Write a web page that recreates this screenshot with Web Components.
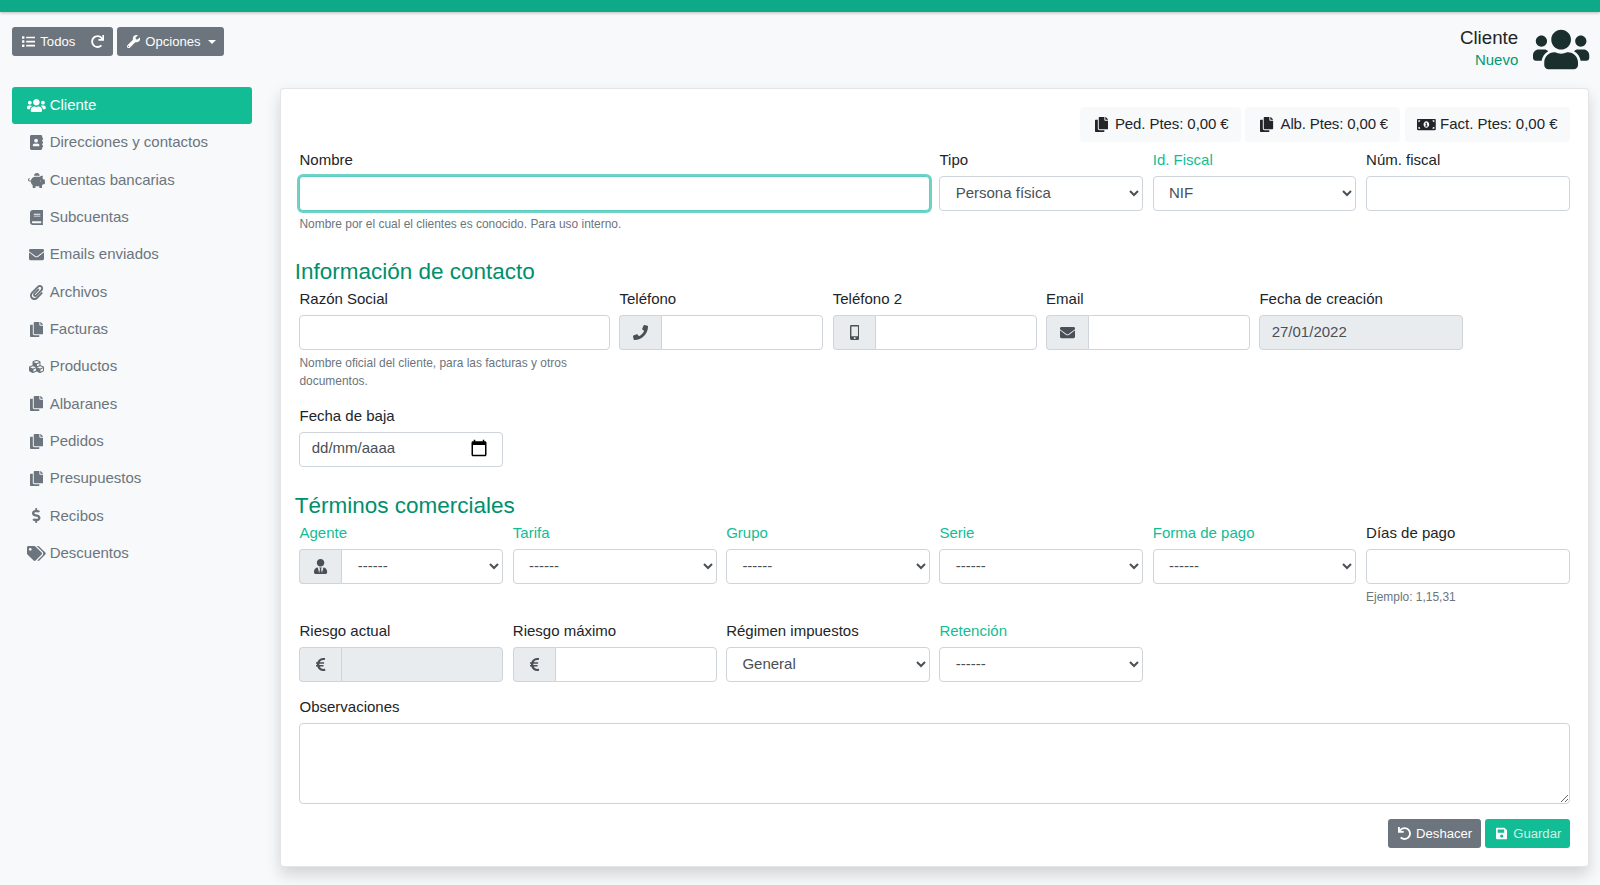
<!DOCTYPE html>
<html lang="es">
<head>
<meta charset="utf-8">
<title>Cliente</title>
<style>
  html, body { margin: 0; padding: 0; }
  body {
    min-height: 100vh;
    background: #f8f9fa;
    color: #212529;
    font: 15px/1.5 "Liberation Sans", Arial, sans-serif;
  }
</style>
</head>
<body>
<app-topbar></app-topbar>
<app-header></app-header>
<app-main>
  <app-sidebar slot="side">
    <app-nav-item icon="users" active>Cliente</app-nav-item>
    <app-nav-item icon="address-book">Direcciones y contactos</app-nav-item>
    <app-nav-item icon="piggy-bank">Cuentas bancarias</app-nav-item>
    <app-nav-item icon="book">Subcuentas</app-nav-item>
    <app-nav-item icon="envelope">Emails enviados</app-nav-item>
    <app-nav-item icon="paperclip">Archivos</app-nav-item>
    <app-nav-item icon="copy">Facturas</app-nav-item>
    <app-nav-item icon="cubes">Productos</app-nav-item>
    <app-nav-item icon="copy">Albaranes</app-nav-item>
    <app-nav-item icon="copy">Pedidos</app-nav-item>
    <app-nav-item icon="copy">Presupuestos</app-nav-item>
    <app-nav-item icon="dollar-sign">Recibos</app-nav-item>
    <app-nav-item icon="tags">Descuentos</app-nav-item>
  </app-sidebar>
  <app-card slot="content">
    <app-stats>
      <app-stat icon="copy" style="letter-spacing: -.08px">Ped. Ptes: 0,00 €</app-stat>
      <app-stat icon="copy" style="letter-spacing: -.15px">Alb. Ptes: 0,00 €</app-stat>
      <app-stat icon="money-bill-alt">Fact. Ptes: 0,00 €</app-stat>
    </app-stats>
    <app-row>
      <app-field span="6" label="Nombre" focused help="Nombre por el cual el clientes es conocido. Para uso interno."></app-field>
      <app-field span="2" label="Tipo" kind="select" value="Persona física"></app-field>
      <app-field span="2" label="Id. Fiscal" accent kind="select" value="NIF"></app-field>
      <app-field span="2" label="Núm. fiscal"></app-field>
    </app-row>
    <app-section>Información de contacto</app-section>
    <app-row>
      <app-field span="3" label="Razón Social" help="Nombre oficial del cliente, para las facturas y otros documentos."></app-field>
      <app-field span="2" label="Teléfono" addon="phone"></app-field>
      <app-field span="2" label="Teléfono 2" addon="mobile-alt"></app-field>
      <app-field span="2" label="Email" addon="envelope"></app-field>
      <app-field span="2" label="Fecha de creación" value="27/01/2022" disabled></app-field>
    </app-row>
    <app-row>
      <app-field span="2" label="Fecha de baja" kind="date"></app-field>
    </app-row>
    <app-section>Términos comerciales</app-section>
    <app-row>
      <app-field span="2" label="Agente" accent kind="select" addon="user-tie" value="------"></app-field>
      <app-field span="2" label="Tarifa" accent kind="select" value="------"></app-field>
      <app-field span="2" label="Grupo" accent kind="select" value="------"></app-field>
      <app-field span="2" label="Serie" accent kind="select" value="------"></app-field>
      <app-field span="2" label="Forma de pago" accent kind="select" value="------"></app-field>
      <app-field span="2" label="Días de pago" help="Ejemplo: 1,15,31" style="padding-bottom: 12.5px"></app-field>
    </app-row>
    <app-row>
      <app-field span="2" label="Riesgo actual" addon="euro-sign" disabled></app-field>
      <app-field span="2" label="Riesgo máximo" addon="euro-sign"></app-field>
      <app-field span="2" label="Régimen impuestos" kind="select" value="General"></app-field>
      <app-field span="2" label="Retención" accent kind="select" value="------"></app-field>
    </app-row>
    <app-row>
      <app-field span="12" label="Observaciones" kind="area"></app-field>
    </app-row>
    <app-actions></app-actions>
  </app-card>
</app-main>

<script>
const ICONS = {
  users: [640, "M96 224c35.3 0 64-28.7 64-64s-28.7-64-64-64-64 28.7-64 64 28.7 64 64 64zm448 0c35.3 0 64-28.7 64-64s-28.7-64-64-64-64 28.7-64 64 28.7 64 64 64zm32 32h-64c-17.6 0-33.5 7.1-45.1 18.6 40.3 22.1 68.9 62 75.1 109.4h66c17.7 0 32-14.3 32-32v-32c0-35.3-28.7-64-64-64zm-256 0c61.9 0 112-50.1 112-112S381.9 32 320 32 208 82.1 208 144s50.1 112 112 112zm76.8 32h-8.3c-20.8 10-43.9 16-68.5 16s-47.6-6-68.5-16h-8.3C179.6 288 128 339.6 128 403.2V432c0 26.5 21.5 48 48 48h288c26.5 0 48-21.5 48-48v-28.8c0-63.6-51.6-115.2-115.2-115.2zm-223.7-13.4C161.5 263.1 145.6 256 128 256H64c-35.3 0-64 28.7-64 64v32c0 17.7 14.3 32 32 32h65.9c6.3-47.4 34.9-87.3 75.2-109.4z"],
  list: [512, "M80 368H16a16 16 0 0 0-16 16v64a16 16 0 0 0 16 16h64a16 16 0 0 0 16-16v-64a16 16 0 0 0-16-16zm0-320H16A16 16 0 0 0 0 64v64a16 16 0 0 0 16 16h64a16 16 0 0 0 16-16V64a16 16 0 0 0-16-16zm0 160H16a16 16 0 0 0-16 16v64a16 16 0 0 0 16 16h64a16 16 0 0 0 16-16v-64a16 16 0 0 0-16-16zm416 176H176a16 16 0 0 0-16 16v32a16 16 0 0 0 16 16h320a16 16 0 0 0 16-16v-32a16 16 0 0 0-16-16zm0-320H176a16 16 0 0 0-16 16v32a16 16 0 0 0 16 16h320a16 16 0 0 0 16-16V80a16 16 0 0 0-16-16zm0 160H176a16 16 0 0 0-16 16v32a16 16 0 0 0 16 16h320a16 16 0 0 0 16-16v-32a16 16 0 0 0-16-16z"],
  redo: [512, "M500.33 0h-47.41a12 12 0 0 0-12 12.57l4 82.76A247.42 247.42 0 0 0 256 8C119.34 8 7.9 119.53 8 256.19 8.1 393.07 119.1 504 256 504a247.1 247.1 0 0 0 166.18-63.91 12 12 0 0 0 .48-17.43l-34-34a12 12 0 0 0-16.38-.55A176 176 0 1 1 402.1 157.8l-101.53-4.87a12 12 0 0 0-12.57 12v47.41a12 12 0 0 0 12 12h200.33a12 12 0 0 0 12-12V12a12 12 0 0 0-12-12z"],
  undo: [512, "M212.333 224.333H12c-6.627 0-12-5.373-12-12V12C0 5.373 5.373 0 12 0h48c6.627 0 12 5.373 12 12v78.112C117.773 39.279 184.26 7.47 258.175 8.007c136.906.994 246.448 111.623 246.157 248.532C504.041 393.258 393.12 504 256.333 504c-64.089 0-122.496-24.313-166.51-64.215-5.099-4.622-5.334-12.554-.467-17.42l33.967-33.967c4.474-4.474 11.662-4.717 16.401-.525C170.76 415.336 211.58 432 256.333 432c97.268 0 176-78.716 176-176 0-97.267-78.716-176-176-176-58.496 0-110.28 28.476-142.274 72.333h98.274c6.627 0 12 5.373 12 12v48c0 6.627-5.373 12-12 12z"],
  wrench: [512, "M507.73 109.1c-2.24-9.03-13.54-12.09-20.12-5.51l-74.36 74.36-67.88-11.31-11.31-67.88 74.36-74.36c6.62-6.62 3.43-17.9-5.66-20.16-47.38-11.74-99.55.91-136.58 37.93-39.64 39.64-50.55 97.1-34.05 147.2L18.74 402.76c-24.99 24.99-24.99 65.51 0 90.5 24.99 24.99 65.51 24.99 90.5 0l213.21-213.21c50.12 16.71 107.47 5.68 147.37-34.22 37.07-37.07 49.7-89.32 37.91-136.73zM64 472c-13.25 0-24-10.75-24-24 0-13.26 10.75-24 24-24s24 10.74 24 24c0 13.25-10.75 24-24 24z"],
  "address-book": [448, "M436 160c6.6 0 12-5.4 12-12v-40c0-6.6-5.4-12-12-12h-20V48c0-26.5-21.5-48-48-48H48C21.5 0 0 21.5 0 48v416c0 26.5 21.5 48 48 48h320c26.5 0 48-21.5 48-48v-48h20c6.6 0 12-5.4 12-12v-40c0-6.6-5.4-12-12-12h-20v-64h20c6.6 0 12-5.4 12-12v-40c0-6.6-5.4-12-12-12h-20v-64h20zm-228-32c35.3 0 64 28.7 64 64s-28.7 64-64 64-64-28.7-64-64 28.7-64 64-64zm112 236.8c0 10.6-10 19.2-22.4 19.2H118.4C106 384 96 375.4 96 364.8v-19.2c0-31.8 30.1-57.6 67.2-57.6h5c12.3 5.1 25.7 8 39.8 8s27.6-2.9 39.8-8h5c37.1 0 67.2 25.8 67.2 57.6v19.2z"],
  "piggy-bank": [576, "M560 224h-29.5c-8.8-20-21.6-37.7-37.4-52.5L512 96h-32c-29.4 0-55.4 13.5-73 34.3-7.6-1.1-15.1-2.3-23-2.3H256c-77.4 0-141.9 55-156.8 128H56c-14.8 0-26.5-13.5-23.5-28.8C34.7 215.8 45.4 208 57 208h1c3.3 0 6-2.7 6-6v-20c0-3.3-2.7-6-6-6-28.5 0-53.9 20.4-57.5 48.6C-3.9 258.8 22.7 288 56 288h40c0 52.2 25.4 98.1 64 127.3V496c0 8.8 7.2 16 16 16h64c8.8 0 16-7.2 16-16v-48h128v48c0 8.8 7.2 16 16 16h64c8.8 0 16-7.2 16-16v-80.7c11.8-8.9 22.3-19.4 31.3-31.3H560c8.8 0 16-7.2 16-16V240c0-8.8-7.2-16-16-16zm-128 64c-8.8 0-16-7.2-16-16s7.2-16 16-16 16 7.2 16 16-7.2 16-16 16zM256 96h128c5.4 0 10.7.4 15.9.8 0-.3.1-.5.1-.8 0-53-43-96-96-96s-96 43-96 96c0 2.1.5 4.1.6 6.2 15.2-3.9 31-6.2 47.4-6.2z"],
  book: [448, "M448 360V24c0-13.3-10.7-24-24-24H96C43 0 0 43 0 96v320c0 53 43 96 96 96h328c13.3 0 24-10.7 24-24v-16c0-7.5-3.5-14.3-8.9-18.7-4.2-15.4-4.2-59.3 0-74.7 5.4-4.3 8.9-11.1 8.9-18.6zM128 134c0-3.3 2.7-6 6-6h212c3.3 0 6 2.7 6 6v20c0 3.3-2.7 6-6 6H134c-3.3 0-6-2.7-6-6v-20zm0 64c0-3.3 2.7-6 6-6h212c3.3 0 6 2.7 6 6v20c0 3.3-2.7 6-6 6H134c-3.3 0-6-2.7-6-6v-20zm253.4 250H96c-17.7 0-32-14.3-32-32 0-17.6 14.4-32 32-32h285.4c-1.9 17.1-1.9 46.9 0 64z"],
  envelope: [512, "M502.3 190.8c3.9-3.1 9.7-.2 9.7 4.7V400c0 26.5-21.5 48-48 48H48c-26.5 0-48-21.5-48-48V195.6c0-5 5.7-7.8 9.7-4.7 22.4 17.4 52.1 39.5 154.1 113.6 21.1 15.4 56.7 47.8 92.2 47.6 35.7.3 72-32.8 92.3-47.6 102-74.1 131.6-96.3 154-113.7zM256 320c23.2.4 56.6-29.2 73.4-41.4 132.7-96.3 142.8-104.7 173.4-128.7 5.8-4.5 9.2-11.5 9.2-18.9v-19c0-26.5-21.5-48-48-48H48C21.5 64 0 85.5 0 112v19c0 7.4 3.4 14.3 9.2 18.9 30.6 23.9 40.7 32.4 173.4 128.7 16.8 12.2 50.2 41.8 73.4 41.4z"],
  paperclip: [448, "M43.246 466.142c-58.43-60.289-57.341-157.511 1.386-217.581L254.392 34c44.316-45.332 116.351-45.336 160.671 0 43.89 44.894 43.943 117.329 0 162.276L232.214 383.128c-29.855 30.537-78.633 30.111-107.982-.998-28.275-29.97-27.368-77.473 1.452-106.953l143.743-146.835c6.182-6.314 16.312-6.422 22.626-.241l22.861 22.379c6.315 6.182 6.422 16.312.241 22.626L171.427 319.927c-4.932 5.045-5.236 13.428-.648 18.292 4.372 4.634 11.245 4.711 15.688.165l182.849-186.851c19.613-20.062 19.613-52.725-.011-72.798-19.189-19.627-49.957-19.637-69.154 0L90.39 293.295c-34.763 35.56-35.299 93.12-1.191 128.313 34.01 35.093 88.985 35.137 123.058.286l172.06-175.999c6.177-6.319 16.307-6.433 22.626-.256l22.877 22.364c6.319 6.177 6.434 16.307.256 22.626l-172.06 175.998c-59.576 60.938-155.943 60.216-214.77-.485z"],
  copy: [448, "M320 448v40c0 13.255-10.745 24-24 24H24c-13.255 0-24-10.745-24-24V120c0-13.255 10.745-24 24-24h72v296c0 30.879 25.121 56 56 56h168zm0-344V0H152c-13.255 0-24 10.745-24 24v368c0 13.255 10.745 24 24 24h272c13.255 0 24-10.745 24-24V128H344c-13.2 0-24-10.8-24-24zm120.971-31.029L375.029 7.029A24 24 0 0 0 358.059 0H352v96h96v-6.059a24 24 0 0 0-7.029-16.97z"],
  cubes: [512, "M488.6 250.2L392 214V105.5c0-15-9.3-28.4-23.4-33.7l-100-37.5c-8.1-3.1-17.1-3.1-25.3 0l-100 37.5c-14.1 5.3-23.4 18.7-23.4 33.7V214l-96.6 36.2C9.3 255.5 0 268.9 0 283.9V394c0 13.6 7.7 26.1 19.9 32.2l100 50c10.1 5.1 22.1 5.1 32.2 0l103.9-52 103.9 52c10.1 5.1 22.1 5.1 32.2 0l100-50c12.2-6.1 19.9-18.6 19.9-32.2V283.9c0-15-9.3-28.4-23.4-33.7zM358 214.8l-85 31.9v-68.2l85-37v73.3zM154 104.1l102-38.2 102 38.2v.6l-102 41.4-102-41.4v-.6zm84 291.1l-85 42.5v-79.1l85-38.8v75.4zm0-112l-102 41.4-102-41.4v-.6l102-38.2 102 38.2v.6zm240 112l-85 42.5v-79.1l85-38.8v75.4zm0-112l-102 41.4-102-41.4v-.6l102-38.2 102 38.2v.6z"],
  "dollar-sign": [288, "M209.2 233.4l-108-31.6C88.7 198.2 80 186.5 80 173.5c0-16.3 13.2-29.5 29.5-29.5h66.3c12.2 0 24.2 3.7 34.2 10.5 6.1 4.1 14.3 3.1 19.5-2l34.8-34c7.1-6.9 6.1-18.4-1.8-24.5C238 74.8 207.4 64.1 176 64V16c0-8.8-7.2-16-16-16h-32c-8.8 0-16 7.2-16 16v48h-2.5C45.8 64-5.4 118.7.5 183.6c4.2 46.1 39.4 83.6 83.8 96.6l102.5 30c12.5 3.7 21.2 15.3 21.2 28.3 0 16.3-13.2 29.5-29.5 29.5h-66.3C100 368 88 364.3 78 357.5c-6.1-4.1-14.3-3.1-19.5 2l-34.8 34c-7.1 6.9-6.1 18.4 1.8 24.5 24.5 19.2 55.1 29.9 86.5 30v48c0 8.8 7.2 16 16 16h32c8.8 0 16-7.2 16-16v-48.2c46.6-.9 90.3-28.6 105.7-72.7 21.5-61.6-14.6-124.8-72.5-141.7z"],
  tags: [640, "M497.941 225.941L286.059 14.059A48 48 0 0 0 252.118 0H48C21.49 0 0 21.49 0 48v204.118a48 48 0 0 0 14.059 33.941l211.882 211.882c18.744 18.745 49.136 18.746 67.882 0l204.118-204.118c18.745-18.745 18.745-49.137 0-67.882zM112 160c-26.51 0-48-21.49-48-48s21.49-48 48-48 48 21.49 48 48-21.49 48-48 48zm513.941 133.823L421.823 497.941c-18.745 18.745-49.137 18.745-67.882 0l-.36-.36L527.64 323.522c16.999-16.999 26.36-39.6 26.36-63.64s-9.362-46.641-26.36-63.64L331.397 0h48.721a48 48 0 0 1 33.941 14.059l211.882 211.882c18.745 18.745 18.745 49.137 0 67.882z"],
  "money-bill-alt": [640, "M352 288h-16v-88c0-4.42-3.58-8-8-8h-13.58c-4.74 0-9.37 1.4-13.31 4.03l-15.33 10.22a7.995 7.995 0 0 0-2.22 11.09l8.88 13.31a7.995 7.995 0 0 0 11.09 2.22l.47-.31V288h-16c-4.42 0-8 3.58-8 8v16c0 4.42 3.58 8 8 8h64c4.42 0 8-3.58 8-8v-16c0-4.42-3.58-8-8-8zM608 64H32C14.33 64 0 78.33 0 96v320c0 17.67 14.33 32 32 32h576c17.67 0 32-14.33 32-32V96c0-17.67-14.33-32-32-32zM48 400v-64c35.35 0 64 28.65 64 64H48zm0-224v-64h64c0 35.35-28.65 64-64 64zm272 192c-53.02 0-96-50.15-96-112 0-61.86 42.98-112 96-112s96 50.14 96 112c0 61.83-42.98 112-96 112zm272 32h-64c0-35.35 28.65-64 64-64v64zm0-224c-35.35 0-64-28.65-64-64h64v64z"],
  phone: [512, "M493.4 24.6l-104-24c-11.3-2.6-22.9 3.3-27.5 13.9l-48 112c-4.2 9.8-1.4 21.3 6.9 28l60.6 49.6c-36 76.7-98.9 140.5-177.2 177.2l-49.6-60.6c-6.8-8.3-18.2-11.1-28-6.9l-112 48C3.9 366.5-2 378.1.6 389.4l24 104C27.1 504.2 36.7 512 48 512c256.1 0 464-207.5 464-464 0-11.2-7.7-20.9-18.6-23.4z"],
  "mobile-alt": [320, "M272 0H48C21.5 0 0 21.5 0 48v416c0 26.5 21.5 48 48 48h224c26.5 0 48-21.5 48-48V48c0-26.5-21.5-48-48-48zM160 480c-17.7 0-32-14.3-32-32s14.3-32 32-32 32 14.3 32 32-14.3 32-32 32zm112-108c0 6.6-5.4 12-12 12H60c-6.6 0-12-5.4-12-12V60c0-6.6 5.4-12 12-12h200c6.6 0 12 5.4 12 12v312z"],
  "user-tie": [448, "M224 256c70.7 0 128-57.3 128-128S294.7 0 224 0 96 57.3 96 128s57.3 128 128 128zm95.8 32.6L272 480l-32-136 32-56h-96l32 56-32 136-47.8-191.4C56.9 292 0 350.3 0 422.4V464c0 26.5 21.5 48 48 48h352c26.5 0 48-21.5 48-48v-41.6c0-72.1-56.9-130.4-128.2-133.8z"],
  "euro-sign": [320, "M310.706 413.765c-1.314-6.63-7.835-10.872-14.424-9.369-10.692 2.439-27.422 5.413-45.426 5.413-56.763 0-101.929-34.79-121.461-85.449h113.689a12 12 0 0 0 11.708-9.369l6.373-28.36c1.686-7.502-4.019-14.631-11.708-14.631H115.22c-1.21-14.328-1.414-28.287.137-42.245H261.95a12 12 0 0 0 11.723-9.434l6.512-29.755c1.638-7.484-4.061-14.566-11.723-14.566H130.184c20.633-44.991 62.69-75.03 117.619-75.03 14.486 0 28.564 2.25 37.851 4.145 6.216 1.268 12.347-2.498 14.002-8.623l11.991-44.368c1.822-6.741-2.465-13.616-9.326-14.917C290.217 34.912 270.71 32 249.635 32 152.451 32 74.03 92.252 45.075 176H12c-6.627 0-12 5.373-12 12v29.755c0 6.627 5.373 12 12 12h21.569c-1.009 13.607-1.181 29.287-.181 42.245H12c-6.627 0-12 5.373-12 12v28.36c0 6.627 5.373 12 12 12h30.114C67.139 414.692 145.264 480 249.635 480c26.301 0 48.562-4.544 61.101-7.788 6.167-1.595 10.027-7.708 8.788-13.957l-8.818-44.49z"],
  save: [448, "M433.941 129.941l-83.882-83.882A48 48 0 0 0 316.118 32H48C21.49 32 0 53.49 0 80v352c0 26.51 21.49 48 48 48h352c26.51 0 48-21.49 48-48V163.882a48 48 0 0 0-14.059-33.941zM224 416c-35.346 0-64-28.654-64-64 0-35.346 28.654-64 64-64s64 28.654 64 64c0 35.346-28.654 64-64 64zm96-304.52V212c0 6.627-5.373 12-12 12H76c-6.627 0-12-5.373-12-12V108c0-6.627 5.373-12 12-12h228.52c3.183 0 6.235 1.264 8.485 3.515l3.48 3.48A11.996 11.996 0 0 1 320 111.48z"]
};

// <app-icon name="users" fw> draws one of the icons above at 1em
class AppIcon extends HTMLElement {
  constructor() {
    super();
    this.attachShadow({ mode: "open" });
  }
  connectedCallback() {
    const icon = ICONS[this.getAttribute("name")];
    this.shadowRoot.innerHTML = `
      <style>
        :host {
          display: inline-flex;
          justify-content: center;
          flex: none;
          height: 1em;
          vertical-align: -0.125em;
          white-space: normal;
        }
        :host([fw]) { width: 1.25em; }
        svg { height: 1em; display: block; }
      </style>
      <svg viewBox="0 0 ${icon[0]} 512"><path fill="currentColor" d="${icon[1]}"></path></svg>`;
  }
}
customElements.define("app-icon", AppIcon);

class AppTopbar extends HTMLElement {
  constructor() {
    super();
    this.attachShadow({ mode: "open" });
    this.shadowRoot.innerHTML = `
      <style>
        :host { display: block; height: 12px; background: #0daa8a; box-shadow: 0 1px 3px rgba(0,0,0,.25); }
      </style>`;
  }
}
customElements.define("app-topbar", AppTopbar);

// small bootstrap like button
class AppBtn extends HTMLElement {
  constructor() {
    super();
    this.attachShadow({ mode: "open" });
    this.shadowRoot.innerHTML = `<style>
        :host {
          display: inline-flex;
          align-items: center;
          box-sizing: border-box;
          height: 29px;
          padding: 0 8.5px;
          border-radius: 3px;
          background: #6c757d;
          color: #fff;
          font-size: 13.125px;
          white-space: pre;
        }
        :host([primary]) { background: #12bc95; }
      </style><slot></slot>`;
  }
}
customElements.define("app-btn", AppBtn);

class AppHeader extends HTMLElement {
  constructor() {
    super();
    this.attachShadow({ mode: "open" });
    this.shadowRoot.innerHTML = `
      <style>
        :host {
          display: flex;
          justify-content: space-between;
          align-items: flex-start;
          box-sizing: border-box;
          height: 75px;
          padding: 15px 10.5px 0 12px;
        }
        .left { display: flex; }
        .opts { margin-left: 3.8px; }
        .todos { border-radius: 3px 0 0 3px; }
        .redo { margin-left: -1px; border-radius: 0 3px 3px 0; }
        .caret {
          display: inline-block;
          margin-left: 7px;
          border-top: 4px solid;
          border-left: 4px solid transparent;
          border-right: 4px solid transparent;
        }
        .right { display: flex; align-items: flex-start; }
        .txt { text-align: right; margin-right: 15px; }
        .title { font-size: 18.75px; line-height: 22.5px; margin-top: 0; }
        .sub { color: #009970; line-height: 22.5px; margin-top: -1px; }
        .big { font-size: 45px; color: #1c2f2f; }
      </style>
      <div class="left">
        <app-btn class="todos"><app-icon name="list" fw></app-icon> Todos</app-btn>
        <app-btn class="redo"><app-icon name="redo"></app-icon></app-btn>
        <app-btn class="opts"><app-icon name="wrench" fw></app-icon> Opciones<span class="caret"></span></app-btn>
      </div>
      <div class="right">
        <div class="txt">
          <div class="title">Cliente</div>
          <div class="sub">Nuevo</div>
        </div>
        <app-icon class="big" name="users"></app-icon>
      </div>`;
  }
}
customElements.define("app-header", AppHeader);

class AppMain extends HTMLElement {
  constructor() {
    super();
    this.attachShadow({ mode: "open" });
    this.shadowRoot.innerHTML = `
      <style>
        :host {
          display: grid;
          grid-template-columns: 240px 1fr;
          column-gap: 28.3px;
          padding: 0 11px 18px 12px;
          align-items: start;
        }
      </style>
      <slot name="side"></slot>
      <slot name="content"></slot>`;
  }
}
customElements.define("app-main", AppMain);

class AppSidebar extends HTMLElement {
  constructor() {
    super();
    this.attachShadow({ mode: "open" });
    this.shadowRoot.innerHTML = `
      <style>:host { display: flex; flex-direction: column; }</style>
      <slot></slot>`;
  }
}
customElements.define("app-sidebar", AppSidebar);

class AppNavItem extends HTMLElement {
  constructor() {
    super();
    this.attachShadow({ mode: "open" });
  }
  connectedCallback() {
    this.shadowRoot.innerHTML = `<style>
        :host {
          display: flex;
          align-items: center;
          gap: 3.9px;
          box-sizing: border-box;
          height: 37.33px;
          padding: 0 0 .6px 15px;
          border-radius: 3px;
          color: #6c757d;
          white-space: pre;
        }
        :host([active]) { background: #12bc95; color: #fff; }
      </style><app-icon name="${this.getAttribute("icon")}" fw></app-icon><slot></slot>`;
  }
}
customElements.define("app-nav-item", AppNavItem);

class AppCard extends HTMLElement {
  constructor() {
    super();
    this.attachShadow({ mode: "open" });
    this.shadowRoot.innerHTML = `
      <style>
        :host {
          display: block;
          box-sizing: border-box;
          height: 779.7px;
          margin-top: .7px;
          padding: 18px 18.2px 0;
          background: #fff;
          border: 1px solid rgba(0,0,0,.1);
          border-radius: 4px;
          box-shadow: 0 7.5px 15px rgba(0,0,0,.15);
        }
      </style>
      <slot></slot>`;
  }
}
customElements.define("app-card", AppCard);

class AppStats extends HTMLElement {
  constructor() {
    super();
    this.attachShadow({ mode: "open" });
    this.shadowRoot.innerHTML = `
      <style>:host { display: flex; justify-content: flex-end; gap: 4.5px; margin-bottom: 7px; }</style>
      <slot></slot>`;
  }
}
customElements.define("app-stats", AppStats);

class AppStat extends HTMLElement {
  constructor() {
    super();
    this.attachShadow({ mode: "open" });
  }
  connectedCallback() {
    this.shadowRoot.innerHTML = `<style>
        :host {
          display: flex;
          align-items: center;
          gap: 4.2px;
          box-sizing: border-box;
          height: 35px;
          padding: 0 12.25px;
          background: #f8f9fa;
          border-radius: 4px;
          white-space: pre;
        }
      </style><app-icon name="${this.getAttribute("icon")}" fw></app-icon><slot></slot>`;
  }
}
customElements.define("app-stat", AppStat);

class AppSection extends HTMLElement {
  constructor() {
    super();
    this.attachShadow({ mode: "open" });
    this.shadowRoot.innerHTML = `
      <style>
        :host {
          display: block;
          margin: 10.5px 0 3px -4.8px;
          color: #008f6b;
          font-size: 22.5px;
          line-height: 27px;
        }
      </style>
      <slot></slot>`;
  }
}
customElements.define("app-section", AppSection);

class AppRow extends HTMLElement {
  constructor() {
    super();
    this.attachShadow({ mode: "open" });
    this.shadowRoot.innerHTML = `
      <style>
        :host { display: grid; grid-template-columns: repeat(12, 1fr); column-gap: 9.6px; }
      </style>
      <slot></slot>`;
  }
}
customElements.define("app-row", AppRow);

class AppField extends HTMLElement {
  constructor() {
    super();
    this.attachShadow({ mode: "open" });
  }
  getControl() {
    const kind = this.getAttribute("kind") || "text";
    const value = this.getAttribute("value") || "";
    const disabled = this.hasAttribute("disabled") ? "disabled" : "";
    if (kind === "select") {
      return `<select class="ctl"><option>${value}</option></select>`;
    }
    if (kind === "area") {
      return `<textarea class="ctl area"></textarea>`;
    }
    if (kind === "date") {
      return `<div class="ctl date"><span>dd/mm/aaaa</span>
        <svg width="18" height="18" viewBox="0 0 24 24"><path d="M20 3h-1V1h-2v2H7V1H5v2H4c-1.1 0-2 .9-2 2v16c0 1.1.9 2 2 2h16c1.1 0 2-.9 2-2V5c0-1.1-.9-2-2-2zm0 18H4V8h16v13z"></path></svg></div>`;
    }
    return `<input class="ctl" type="text" value="${value}" ${disabled}>`;
  }
  getStyles() {
    const span = this.getAttribute("span") || 2;
    return `
      <style>
        :host { display: block; grid-column: span ${span}; min-width: 0; padding-bottom: 14.5px; }
        label { display: block; line-height: 22.5px; margin-bottom: 4.5px; }
        :host([accent]) label { color: #12bc95; }
        .group { display: flex; }
        .addon {
          flex: none;
          box-sizing: border-box;
          width: 42px;
          height: 35px;
          display: flex;
          align-items: center;
          justify-content: center;
          background: #e9ecef;
          border: 1px solid #ced4da;
          border-right: 0;
          border-radius: 4px 0 0 4px;
          color: #495057;
        }
        .ctl {
          flex: 1;
          min-width: 0;
          display: block;
          box-sizing: border-box;
          width: 100%;
          height: 35px;
          margin: 0;
          padding: 0 11.25px 2px;
          background: #fff;
          border: 1px solid #ced4da;
          border-radius: 4px;
          color: #495057;
          font: 15px/1.5 "Liberation Sans", Arial, sans-serif;
          outline: none;
        }
        .addon + .ctl { border-radius: 0 4px 4px 0; }
        :host([disabled]) .ctl { background: #e9ecef; }
        :host([focused]) .ctl {
          border-color: #5fcdc0;
          box-shadow: 0 0 0 2px rgba(95,205,192,.9);
        }
        .area { height: 81px; padding: 5px 11.25px; resize: vertical; }
        .date { flex: 1; display: flex; align-items: center; justify-content: space-between; padding: 0 14.5px 3px 11.25px; }
        small {
          display: block;
          margin-top: 5px;
          color: #6c757d;
          font-size: 11.95px;
          line-height: 17.7px;
        }
      </style>`;
  }
  connectedCallback() {
    const addon = this.getAttribute("addon");
    const help = this.getAttribute("help");
    this.shadowRoot.innerHTML = `
      ${this.getStyles()}
      <label>${this.getAttribute("label")}</label>
      <div class="group">
        ${addon ? `<span class="addon"><app-icon name="${addon}" fw></app-icon></span>` : ""}
        ${this.getControl()}
      </div>
      ${help ? `<small>${help}</small>` : ""}`;
  }
}
customElements.define("app-field", AppField);

class AppActions extends HTMLElement {
  constructor() {
    super();
    this.attachShadow({ mode: "open" });
    this.shadowRoot.innerHTML = `
      <style>
        :host { display: flex; justify-content: flex-end; gap: 4px; margin-top: .7px; }
        .save { color: rgba(255,255,255,.8); }
        .save app-icon { color: #fff; }
      </style>
      <app-btn><app-icon name="undo" fw></app-icon> Deshacer</app-btn>
      <app-btn primary class="save"><app-icon name="save" fw></app-icon> Guardar</app-btn>`;
  }
}
customElements.define("app-actions", AppActions);
</script>
</body>
</html>
